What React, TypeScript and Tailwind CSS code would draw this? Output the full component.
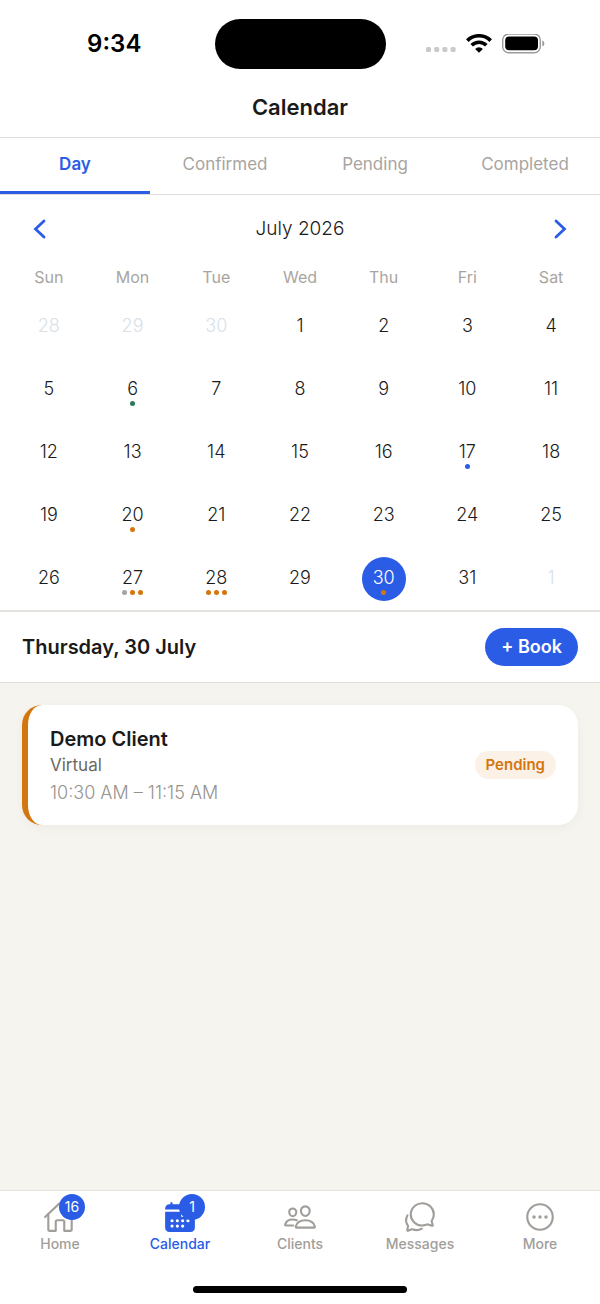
import { useState } from "react";
import type { IconType } from "react-icons";
import {
  IoCalendar,
  IoChatbubblesOutline,
  IoEllipsisHorizontalCircleOutline,
  IoHomeOutline,
  IoPeopleOutline,
} from "react-icons/io5";
import clsx from "clsx";

const tabs = ["Day", "Confirmed", "Pending", "Completed"];

const weekdays = ["Sun", "Mon", "Tue", "Wed", "Thu", "Fri", "Sat"];

const weeks = [
  [28, 29, 30, 1, 2, 3, 4],
  [5, 6, 7, 8, 9, 10, 11],
  [12, 13, 14, 15, 16, 17, 18],
  [19, 20, 21, 22, 23, 24, 25],
  [26, 27, 28, 29, 30, 31, 1],
];

const green = "bg-[#2d7a5a]";
const blue = "bg-[#2b5ce6]";
const orange = "bg-[#d4760f]";
const gray = "bg-[#a3a3a3]";

// Appointment dots by day of the month
const dots: Record<number, string[]> = {
  6: [green],
  17: [blue],
  20: [orange],
  27: [gray, orange, orange],
  28: [orange, orange, orange],
  30: [orange],
};

const navItems: { label: string; icon: IconType; badge?: number }[] = [
  { label: "Home", icon: IoHomeOutline, badge: 16 },
  { label: "Calendar", icon: IoCalendar, badge: 1 },
  { label: "Clients", icon: IoPeopleOutline },
  { label: "Messages", icon: IoChatbubblesOutline },
  { label: "More", icon: IoEllipsisHorizontalCircleOutline },
];

function StatusBar() {
  return (
    <div className="grid grid-cols-[1fr_171px_1fr] items-center pt-[19px] text-black">
      <div className="pl-3.5 text-center text-2xl font-semibold">9:34</div>
      <div className="h-[50px] rounded-full bg-black" />
      <div className="flex items-center gap-2.5 pl-10">
        <svg width="30" height="20" viewBox="0 0 30 20" fill="#cacaca">
          <rect x="0" y="13" width="5" height="5" rx="1.5" />
          <rect x="8.2" y="13" width="5" height="5" rx="1.5" />
          <rect x="16.4" y="13" width="5" height="5" rx="1.5" />
          <rect x="24.6" y="13" width="5" height="5" rx="1.5" />
        </svg>
        <svg width="26" height="20" viewBox="0 0 26 20" fill="none" stroke="currentColor" strokeWidth="3.6">
          <path d="M1.300 6.600a16.600 16.600 0 0 1 23.400 0" />
          <path d="M5.700 11.300a10.300 10.300 0 0 1 14.600 0" />
          <path d="M13 18.800l-3.900-3.900a5.500 5.500 0 0 1 7.800 0z" fill="currentColor" stroke="none" />
        </svg>
        <svg width="43" height="20" viewBox="0 0 43 20">
          <rect x="0.7" y="0.1" width="37.600" height="18.600" rx="6" fill="none" stroke="#9b9b9b" strokeWidth="1.4" />
          <rect x="3.2" y="2.6" width="32.800" height="13.600" rx="4" fill="currentColor" />
          <path d="M40.3 6.400v6c1.300-.4 2-1.600 2-3s-.7-2.600-2-3z" fill="#9b9b9b" />
        </svg>
      </div>
    </div>
  );
}

function Calendar({
  selected,
  onSelect,
}: {
  selected: number;
  onSelect: (day: number) => void;
}) {
  return (
    <section className="border-b-2 border-[#e5e3e0] px-[7px] pb-[9px]">
      <div className="flex items-center justify-between px-5 pt-[18px]">
        <button aria-label="Previous month" className="p-1 text-[#2b5ce6]">
          <svg width="24" height="24" viewBox="0 0 24 24" fill="none" stroke="currentColor" strokeWidth="2.8" strokeLinecap="round">
            <path d="M13 4L4.500 12L13 20" />
          </svg>
        </button>
        <h2 className="text-[19px] font-light">July 2026</h2>
        <button aria-label="Next month" className="p-1 text-[#2b5ce6]">
          <svg width="24" height="24" viewBox="0 0 24 24" fill="none" stroke="currentColor" strokeWidth="2.8" strokeLinecap="round">
            <path d="M11 4L19.500 12L11 20" />
          </svg>
        </button>
      </div>
      <table className="mt-3.5 w-full table-fixed">
        <thead>
          <tr>
            {weekdays.map((day) => (
              <th key={day} className="h-[46px] pb-2.5 text-base font-normal text-[#a8a5a1]">
                {day}
              </th>
            ))}
          </tr>
        </thead>
        <tbody>
          {weeks.map((week, row) => (
            <tr key={row}>
              {week.map((day, col) => {
                const outside = (row === 0 && day > 20) || (row === 4 && day < 10);
                const active = !outside && day === selected;
                return (
                  <td key={col} className={clsx("p-0", row < 4 && "pb-[19px]")}>
                    <button
                      disabled={outside}
                      onClick={() => onSelect(day)}
                      className={clsx(
                        "mx-auto flex size-11 flex-col items-center rounded-full pt-[9px] text-lg/6 font-light",
                        active && "bg-[#2b5ce6] text-white",
                        outside && "text-[#d9e1e8]"
                      )}
                    >
                      {day}
                      {!outside && dots[day] && (
                        <span className="flex gap-[3px]">
                          {dots[day].map((color, i) => (
                            <span key={i} className={clsx("size-[5px] rounded-full", color)} />
                          ))}
                        </span>
                      )}
                    </button>
                  </td>
                );
              })}
            </tr>
          ))}
        </tbody>
      </table>
    </section>
  );
}

export default function App() {
  const [tab, setTab] = useState("Day");
  const [selected, setSelected] = useState(30);

  return (
    <div className="flex min-h-screen flex-col bg-[#f5f4ef] font-['Inter',sans-serif] text-[#1a1a1a]">
      <header className="bg-white">
        <StatusBar />
        <h1 className="pt-[22px] pb-3.5 text-center text-[22px]/8 font-semibold">Calendar</h1>
      </header>

      <div className="bg-white">
        {/* Tabs */}
        <div className="grid grid-cols-4 border-y border-[#dfddda]">
          {tabs.map((name) => (
            <button
              key={name}
              onClick={() => setTab(name)}
              className={clsx(
                "h-[56px] border-b-3 text-[17px]",
                tab === name
                  ? "border-[#2b5ce6] font-semibold text-[#2b5ce6]"
                  : "border-transparent text-[#a8a5a1]"
              )}
            >
              {name}
            </button>
          ))}
        </div>

        <Calendar selected={selected} onSelect={setSelected} />

        {/* Selected day */}
        <div className="flex items-center justify-between border-b border-[#dfddda] px-[22px] py-4">
          <h2 className="text-xl font-semibold">Thursday, 30 July</h2>
          <button className="h-[38px] rounded-full bg-[#2b5ce6] px-4 text-lg font-semibold text-white">
            + Book
          </button>
        </div>
      </div>

      <main className="flex-1 p-[22px]">
        <article className="flex items-center justify-between rounded-[20px] border-l-6 border-[#d4760f] bg-white px-[22px] py-5 shadow-[0_3px_12px_rgba(0,0,0,0.04)]">
          <div>
            <h3 className="text-xl/7 font-semibold">Demo Client</h3>
            <p className="text-[17px]/6 text-[#6b6864]">Virtual</p>
            <p className="mt-1 text-lg/6 font-light text-[#96938f]">10:30 AM – 11:15 AM</p>
          </div>
          <span className="rounded-full bg-[#fbf1e7] px-[11px] py-1 text-[15px]/5 font-semibold text-[#d4760f]">
            Pending
          </span>
        </article>
      </main>

      {/* Bottom navigation */}
      <footer className="border-t border-[#e5e3e0] bg-white">
        <nav className="grid grid-cols-5 pt-[9px]">
          {navItems.map((item) => (
            <a
              key={item.label}
              href="#"
              className={clsx(
                "flex flex-col items-center text-sm/5 font-medium",
                item.label === "Calendar" ? "text-[#2b5ce6]" : "text-[#a19e9a]"
              )}
            >
              <span className="relative">
                <item.icon size={34} />
                {item.badge && (
                  <span className="absolute -top-1.5 left-4 flex size-[26px] items-center justify-center rounded-full bg-[#2b5ce6] text-sm font-normal text-white">
                    {item.badge}
                  </span>
                )}
              </span>
              {item.label}
            </a>
          ))}
        </nav>
        <div className="mx-auto mt-8 mb-[11px] h-[7px] w-[214px] rounded-full bg-black" />
      </footer>
    </div>
  );
}
